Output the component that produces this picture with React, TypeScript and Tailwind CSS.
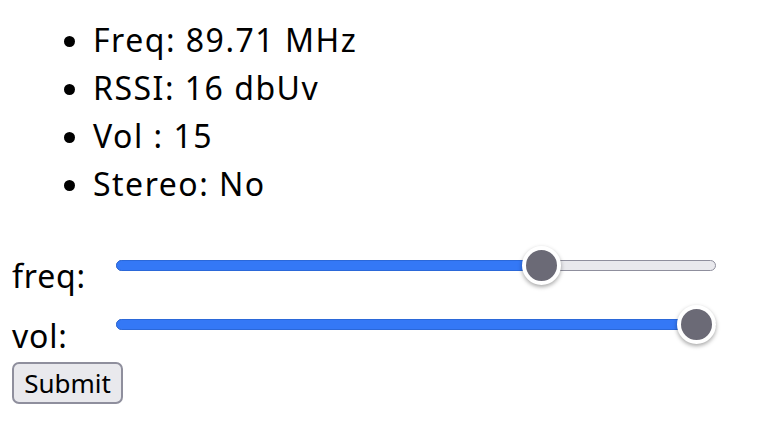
import React from "react";

function Slider({ pos }: { pos: number }) {
  return (
    <div className="relative w-[600px] h-[50px]">
      <div className="absolute left-0 top-[20px] w-[600px] h-[11px] rounded-full bg-[#e9e9ed] border border-[#8f8f9d]" />
      <div
        className="absolute left-0 top-[20px] h-[11px] rounded-full bg-[#3478f6] border border-[#2b68d9]"
        style={{ width: pos + 4 }}
      />
      <div
        className="absolute top-[6px] w-[39px] h-[39px] rounded-full bg-[#6b6a76] border-[4px] border-white shadow-[0_2px_4px_rgba(0,0,0,0.35)]"
        style={{ left: pos - 19.5 }}
      />
    </div>
  );
}

export default function App() {
  return (
    <div className="w-[770px] h-[428px] bg-white text-black" style={{ fontFamily: '"Noto Sans", sans-serif' }}>
      <ul className="list-disc pl-[93px] pt-[16px] text-[32px] leading-[48px] tracking-[1.5px]">
        <li>Freq: 89.71 MHz</li>
        <li>RSSI: 16 dbUv</li>
        <li>Vol : 15</li>
        <li>Stereo: No</li>
      </ul>
      <div className="pl-[12px] pt-[32px]">
        <div className="flex h-[60px]">
          <div className="w-[104px] mt-[12px] text-[32px] leading-[48px] tracking-[0.8px]">freq:</div>
          <Slider pos={425} />
        </div>
        <div className="flex h-[62px]">
          <div className="w-[104px] mt-[12px] text-[32px] leading-[48px] tracking-[0.8px]">vol:</div>
          <div className="-mt-[1px]">
            <Slider pos={580} />
          </div>
        </div>
        <button className="w-[111px] h-[42px] rounded-[7px] border-2 border-[#8f8f9d] bg-[#e9e9ed] text-[26px] leading-[36px] flex items-center justify-center">
          Submit
        </button>
      </div>
    </div>
  );
}
